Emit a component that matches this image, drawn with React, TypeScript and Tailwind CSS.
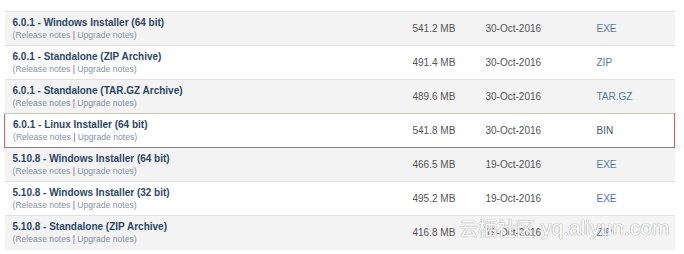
type Row = {
  title: string;
  size: string;
  date: string;
  type: string;
  link?: boolean;
};

const rows: Row[] = [
  { title: "6.0.1 - Windows Installer (64 bit)", size: "541.2 MB", date: "30-Oct-2016", type: "EXE", link: true },
  { title: "6.0.1 - Standalone (ZIP Archive)", size: "491.4 MB", date: "30-Oct-2016", type: "ZIP", link: true },
  { title: "6.0.1 - Standalone (TAR.GZ Archive)", size: "489.6 MB", date: "30-Oct-2016", type: "TAR.GZ", link: true },
  { title: "6.0.1 - Linux Installer (64 bit)", size: "541.8 MB", date: "30-Oct-2016", type: "BIN" },
  { title: "5.10.8 - Windows Installer (64 bit)", size: "466.5 MB", date: "19-Oct-2016", type: "EXE", link: true },
  { title: "5.10.8 - Windows Installer (32 bit)", size: "495.2 MB", date: "19-Oct-2016", type: "EXE", link: true },
  { title: "5.10.8 - Standalone (ZIP Archive)", size: "416.8 MB", date: "19-Oct-2016", type: "ZIP", link: true },
];

export default function App() {
  return (
    <div className="relative h-[254px] w-[684px] overflow-hidden bg-white pt-[11px] pl-[4px] font-['Liberation_Sans',Arial,sans-serif]">
      <table className="w-[671px] border-collapse">
        <tbody>
          {rows.map((r, i) => {
            const hot = r.type === "BIN";
            const striped = i % 2 === 0;
            return (
              <tr
                key={r.title}
                className={
                  hot
                    ? "border border-[#e8595b] border-t-[#f4b8b8] bg-white"
                    : `border-t border-[#e2e2e2] ${striped ? "bg-[#f3f3f3]" : "bg-white"}`
                }
              >
                <td className="h-[34px] w-[408px] pl-[8px] align-middle">
                  <div className="text-[10px] leading-[13px] font-bold text-[#2b4765]">{r.title}</div>
                  <div className="text-[8.6px] leading-[12px] text-[#8494a8]">
                    (<span>Release notes</span> <span className="text-[#9b4fa3]">|</span> <span>Upgrade notes</span>)
                  </div>
                </td>
                <td className="w-[73px] align-middle text-[10px] text-[#555]">{r.size}</td>
                <td className="w-[111px] align-middle text-[10px] text-[#555]">{r.date}</td>
                <td className={`align-middle text-[10px] ${r.link ? "text-[#5577a8]" : "text-[#4f5660]"}`}>{r.type}</td>
              </tr>
            );
          })}
        </tbody>
      </table>
      {/* watermark */}
      <div className="pointer-events-none absolute top-[215px] left-[459px] flex items-end gap-[6px] whitespace-nowrap text-white [text-shadow:0_0_1px_#9a9a9a,0_0_1px_#9a9a9a]">
        <span className="text-[19px] leading-[26px] font-['Noto_Sans_CJK_SC',sans-serif]">云栖社区</span>
        <span className="text-[21px] leading-[26px] font-['Liberation_Sans',sans-serif]">yq.aliyun.com</span>
      </div>
    </div>
  );
}
